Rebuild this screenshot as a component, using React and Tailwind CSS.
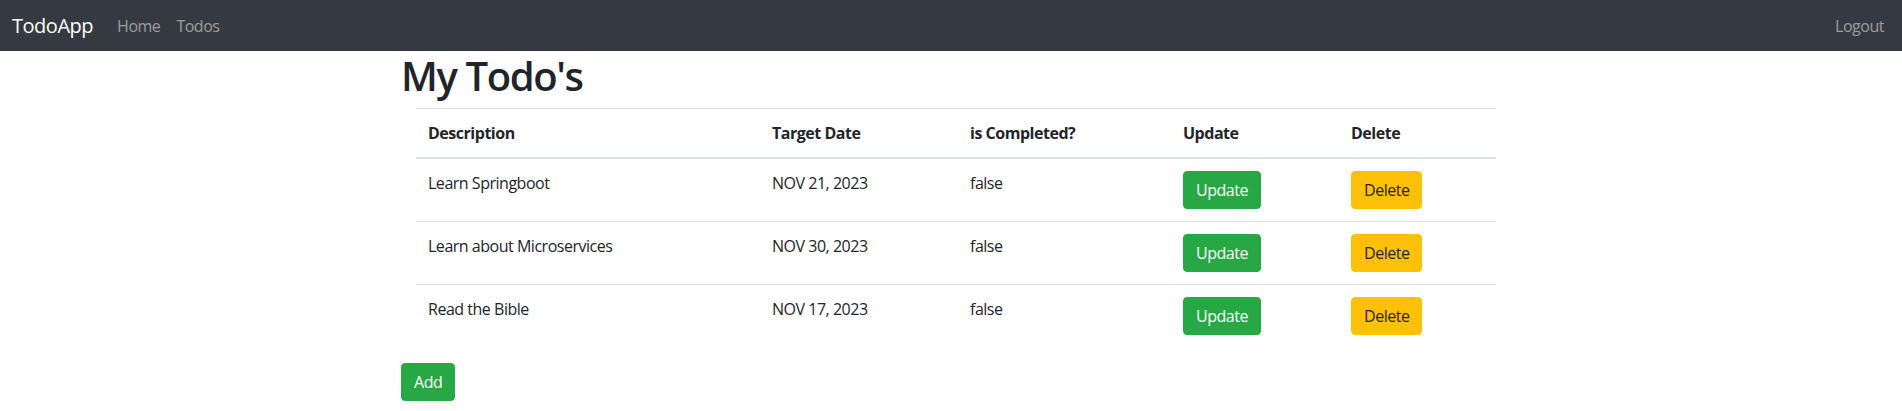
import React from 'react';

const todos = [
  { id: 1, description: 'Learn Springboot', targetDate: 'NOV 21, 2023', done: false },
  { id: 2, description: 'Learn about Microservices', targetDate: 'NOV 30, 2023', done: false },
  { id: 3, description: 'Read the Bible', targetDate: 'NOV 17, 2023', done: false },
];

const App = () => {
  return (
    <div className="min-h-screen bg-white text-[#212529] text-base leading-6 tracking-[-0.03em] font-['Open_Sans',sans-serif]">
      {/* Navbar */}
      <nav className="h-[51px] bg-[#343a40] flex items-center justify-between pl-3 pr-[10px]">
        <div className="flex items-center">
          <a className="text-xl text-white mr-4 leading-[30px]">TodoApp</a>
          <a className="px-2 text-white/50">Home</a>
          <a className="px-2 text-white/50">Todos</a>
        </div>
        <a className="px-2 text-white/50">Logout</a>
      </nav>

      {/* Content */}
      <div className="flex justify-center pl-[10px]">
        <div className="w-[1140px] px-[15px]">
          <h1 className="text-[40px] font-semibold leading-[48px] mt-px mb-2 tracking-[-0.035em]">My Todo's</h1>
          <div className="px-[15px]">
            <table className="w-full table-fixed border-collapse mb-4">
              <thead>
                <tr>
                  <th className="w-[344px] p-3 text-left font-bold align-bottom border-t border-b-2 border-[#dee2e6]">Description</th>
                  <th className="w-[198px] p-3 text-left font-bold align-bottom border-t border-b-2 border-[#dee2e6]">Target Date</th>
                  <th className="w-[213px] p-3 text-left font-bold align-bottom border-t border-b-2 border-[#dee2e6]">is Completed?</th>
                  <th className="w-[168px] p-3 text-left font-bold align-bottom border-t border-b-2 border-[#dee2e6]">Update</th>
                  <th className="w-[157px] p-3 text-left font-bold align-bottom border-t border-b-2 border-[#dee2e6]">Delete</th>
                </tr>
              </thead>
              <tbody>
                {todos.map((todo) => (
                  <tr key={todo.id}>
                    <td className="p-3 align-top border-t border-[#dee2e6]">{todo.description}</td>
                    <td className="p-3 align-top border-t border-[#dee2e6]">{todo.targetDate}</td>
                    <td className="p-3 align-top border-t border-[#dee2e6]">{todo.done.toString()}</td>
                    <td className="p-3 align-top border-t border-[#dee2e6]">
                      <button className="px-3 py-[6px] leading-6 rounded border border-[#28a745] bg-[#28a745] text-white">Update</button>
                    </td>
                    <td className="p-3 align-top border-t border-[#dee2e6]">
                      <button className="px-3 py-[6px] leading-6 rounded border border-[#ffc107] bg-[#ffc107] text-[#212529]">Delete</button>
                    </td>
                  </tr>
                ))}
              </tbody>
            </table>
          </div>
          <button className="px-3 py-[6px] leading-6 rounded border border-[#28a745] bg-[#28a745] text-white">Add</button>
        </div>
      </div>
    </div>
  );
};

export default App;
